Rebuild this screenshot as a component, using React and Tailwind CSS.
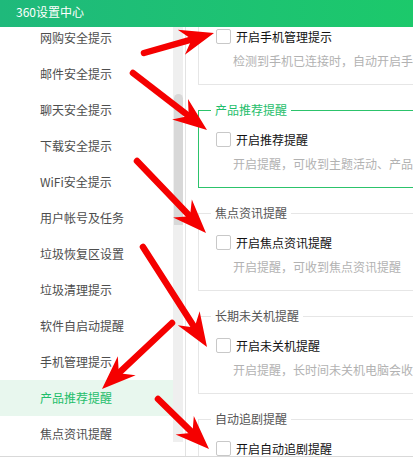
import React from "react";

const menu = [
  "网购安全提示",
  "邮件安全提示",
  "聊天安全提示",
  "下载安全提示",
  "WiFi安全提示",
  "用户帐号及任务",
  "垃圾恢复区设置",
  "垃圾清理提示",
  "软件自启动提醒",
  "手机管理提示",
  "产品推荐提醒",
  "焦点资讯提醒",
];

const sections = [
  { title: "手机管理提示", label: "开启手机管理提示", desc: "检测到手机已连接时，自动开启手机管理助手" },
  { title: "产品推荐提醒", label: "开启推荐提醒", desc: "开启提醒，可收到主题活动、产品推荐等信息", active: true },
  { title: "焦点资讯提醒", label: "开启焦点资讯提醒", desc: "开启提醒，可收到焦点资讯提醒" },
  { title: "长期未关机提醒", label: "开启未关机提醒", desc: "开启提醒，长时间未关机电脑会收到提醒" },
  { title: "自动追剧提醒", label: "开启自动追剧提醒", desc: "开启提醒，可收到追剧更新提醒" },
];

const arrows = [
  [144, 53, 214, 33],
  [133, 73, 207, 130],
  [137, 161, 206, 233],
  [143, 247, 207, 347],
  [172, 323, 102, 389],
  [158, 399, 209, 449],
];

// red annotation arrow, Snagit style
function Arrow({ x1, y1, x2, y2 }) {
  const dx = x2 - x1;
  const dy = y2 - y1;
  const l = Math.hypot(dx, dy);
  const ux = dx / l;
  const uy = dy / l;
  const px = -uy;
  const py = ux;
  const len = 34;
  const half = 13;
  const bx = x2 - ux * len;
  const by = y2 - uy * len;
  const nx = x2 - ux * len * 0.68;
  const ny = y2 - uy * len * 0.68;
  const head = [
    [x2, y2],
    [bx + px * half, by + py * half],
    [nx, ny],
    [bx - px * half, by - py * half],
  ]
    .map((p) => p.join(","))
    .join(" ");
  return (
    <g>
      <line x1={x1} y1={y1} x2={nx + ux * 3} y2={ny + uy * 3} stroke="#f50000" strokeWidth="6.5" strokeLinecap="round" />
      <polygon points={head} fill="#f50000" />
    </g>
  );
}

function Section({ title, label, desc, active }) {
  return (
    <fieldset
      className={`w-[300px] border whitespace-nowrap ${active ? "border-[#2cc36b]" : "border-[#e6e6e6]"}`}
    >
      <legend
        className={`ml-[12px] px-[4px] text-[12px] leading-[16px] ${active ? "text-[#1fbe6b]" : "text-[#555]"}`}
      >
        {title}
      </legend>
      <div className="pl-[17px] pt-[14px] pb-[15px]">
        <div className="flex items-center h-[15px]">
          <span className="w-[15px] h-[15px] border border-[#c8c8c8] rounded-[2px] bg-white" />
          <span className="ml-[5px] text-[12px] leading-[15px] text-[#111]">{label}</span>
        </div>
        <p className="mt-[9px] pl-[17px] text-[12px] leading-[16px] text-[#b2b2b2]">{desc}</p>
      </div>
    </fieldset>
  );
}

export default function App() {
  return (
    <div className="relative w-[413px] h-[463px] overflow-hidden bg-white font-['Noto_Sans_CJK_SC','Noto_Sans',sans-serif]">
      {/* Header */}
      <div className="h-[27px] pl-[16px] pt-[5px] bg-gradient-to-r from-[#1fb97b] to-[#1cc96b] text-white text-[12px] leading-[14px]">
        360设置中心
      </div>

      <div className="flex h-[430px] border-b border-[#d9d9d9]">
        {/* Sidebar */}
        <aside className="flex w-[186px] border-r border-[#e2e2e2] overflow-hidden">
          <ul className="w-[173px] -mt-[7px]">
            {menu.map((m, i) => (
              <li
                key={m}
                className={`h-[36px] pl-[40px] flex items-center text-[12px] ${
                  i === 10 ? "bg-[#e8f7ee] text-[#1fbe6b]" : "text-[#4d4d4d]"
                }`}
              >
                {m}
              </li>
            ))}
          </ul>
          <div className="w-[10px] h-[415px] bg-[#efefef] pt-[67px] flex justify-center">
            <div className="w-[9px] h-[131px] bg-[#d8d8d8] rounded-t-[5px]" />
          </div>
        </aside>

        {/* Content */}
        <main className="flex-1 overflow-hidden pl-[12px]">
          <div className="-mt-[28px] flex flex-col gap-[17px]">
            {sections.map((s) => (
              <Section key={s.title} {...s} />
            ))}
          </div>
        </main>
      </div>

      <svg className="absolute inset-0 pointer-events-none" width="413" height="463">
        {arrows.map(([x1, y1, x2, y2], i) => (
          <Arrow key={i} x1={x1} y1={y1} x2={x2} y2={y2} />
        ))}
      </svg>
    </div>
  );
}
